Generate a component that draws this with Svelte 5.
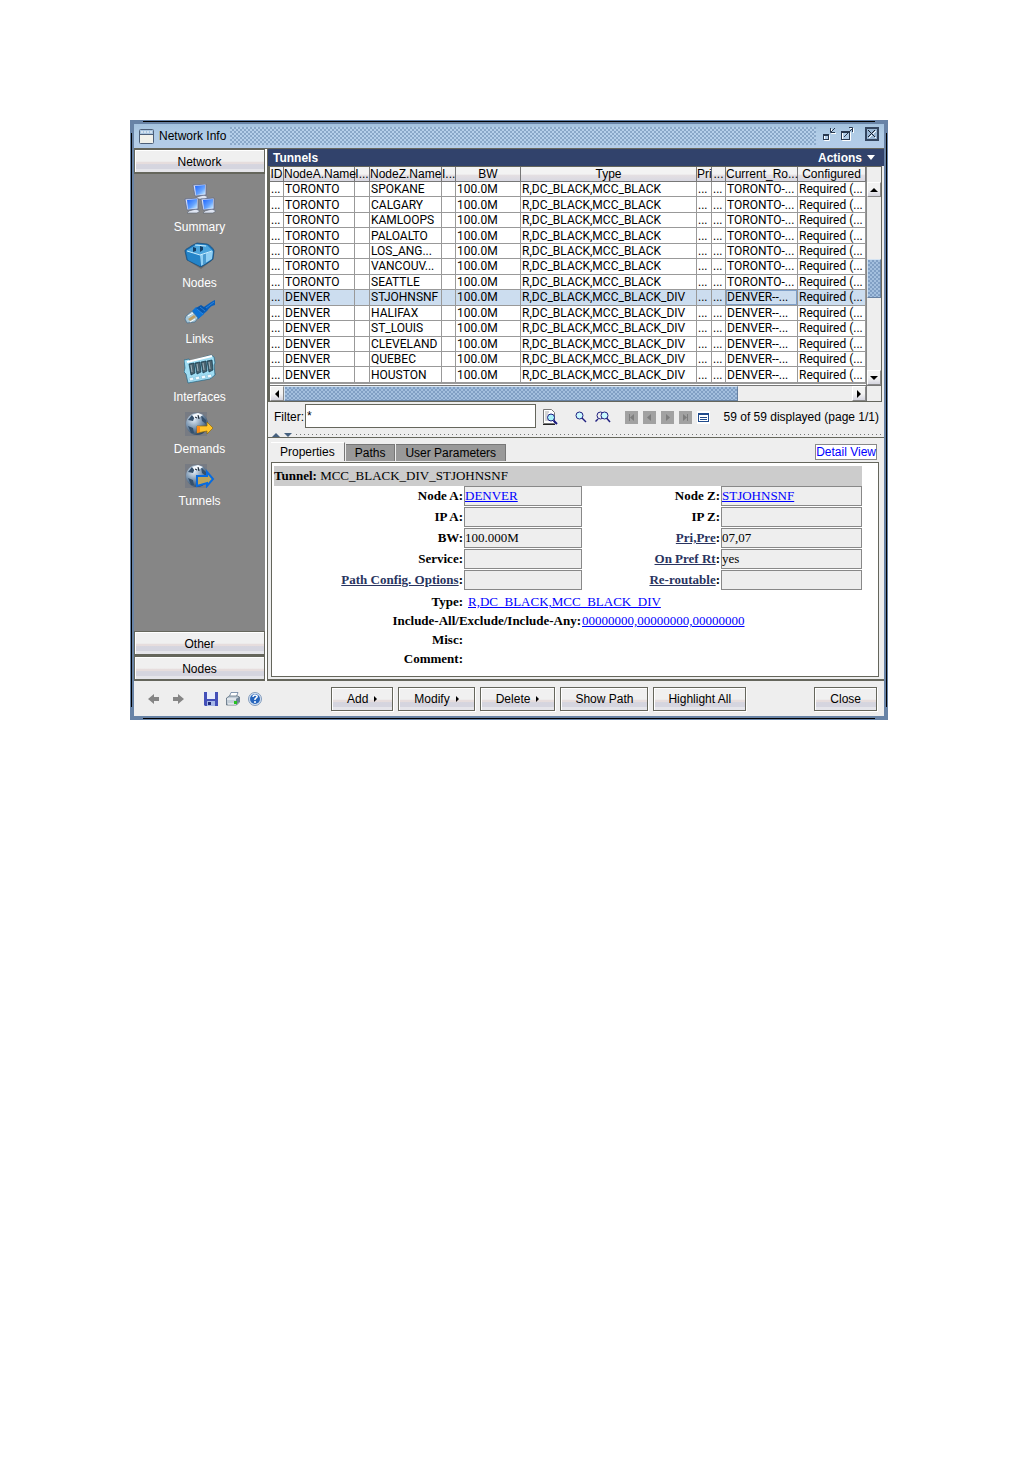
<script>
  const columns = [
    { name: 'ID', width: 14 },
    { name: 'NodeA.Name', width: 71 },
    { name: 'I...', width: 15 },
    { name: 'NodeZ.Name', width: 72 },
    { name: 'I...', width: 14 },
    { name: 'BW', width: 65 },
    { name: 'Type' },
    { name: 'Pri', width: 15 },
    { name: '...', width: 14 },
    { name: 'Current_Ro...', width: 72 },
    { name: 'Configured', width: 68 }
  ];

  const routes = [
    ['TORONTO', ['SPOKANE', 'CALGARY', 'KAMLOOPS', 'PALOALTO', 'LOS_ANG...', 'VANCOUV...', 'SEATTLE']],
    ['DENVER', ['STJOHNSNF', 'HALIFAX', 'ST_LOUIS', 'CLEVELAND', 'QUEBEC', 'HOUSTON']]
  ];

  const rows = routes.flatMap(([from, targets]) =>
    targets.map((to) => {
      const div = from === 'DENVER';
      return [
        '...', from, '', to, '', '100.0M',
        div ? 'R,DC_BLACK,MCC_BLACK_DIV' : 'R,DC_BLACK,MCC_BLACK',
        '...', '...',
        div ? 'DENVER--...' : 'TORONTO-...',
        'Required (...'
      ];
    })
  );

  const sections = ['Summary', 'Nodes', 'Links', 'Interfaces', 'Demands', 'Tunnels'];

  const fields = [
    { id: 'node-a', label: 'Node A', value: 'DENVER', link: true },
    { id: 'node-z', label: 'Node Z', value: 'STJOHNSNF', link: true },
    { id: 'ip-a', label: 'IP A', value: '' },
    { id: 'ip-z', label: 'IP Z', value: '' },
    { id: 'bw', label: 'BW', value: '100.000M' },
    { id: 'pri', label: 'Pri,Pre', value: '07,07', help: true },
    { id: 'service', label: 'Service', value: '' },
    { id: 'pref', label: 'On Pref Rt', value: 'yes', help: true },
    { id: 'options', label: 'Path Config. Options', value: '', help: true },
    { id: 'reroute', label: 'Re-routable', value: '', help: true }
  ];

  const pagers = [
    { name: 'First page', d: 'M4 3h1v7h-1zM9 3v7l-4-3.5z' },
    { name: 'Previous page', d: 'M8 3v7l-4-3.5z' },
    { name: 'Next page', d: 'M5 3v7l4-3.5z' },
    { name: 'Last page', d: 'M8 3h1v7h-1zM4 3v7l4-3.5z' }
  ];

  let selected = $state(7);
  let filter = $state('*');
</script>

{#snippet globe()}
  <rect x="1" y="0" width="22" height="24" fill="#777b83" />
  <circle cx="13" cy="12" r="11" fill="url(#globe)" />
  <path d="M4 8l4-5 3 1-2 5zM17 3l5 5v4l-4-3zM4 14l5 2 1 5-3 0z" fill="#35506c" />
  <path d="M8 3l6-2 5 2-3 2-2-1-3 3z" fill="#f4f8fc" />
  <path d="M14 3l1 4M11 5l2 1" stroke="#111c28" />
{/snippet}

{#snippet icon(name)}
  {#if name === 'Summary'}
    <svg class="tall" viewBox="0 0 32 30" aria-hidden="true">
      {#each [[9, 0], [1, 14], [17, 14]] as [x, y]}
        <g transform="translate({x} {y})">
          <path d="M4 13l-2 2h10l3-2-4-2z" fill="#dfe5f2" stroke="#5d6473" stroke-width=".6" />
          <path d="M0 1l13-1v11l-11 1z" fill="#d4dcf4" stroke="#59658a" stroke-width=".7" />
          <path d="M2 2l10-1v9l-9 1z" fill="url(#screen)" />
        </g>
      {/each}
    </svg>
  {:else if name === 'Nodes'}
    <svg class="mid" viewBox="0 0 32 28" aria-hidden="true">
      <path d="M6 20l11 7 13-10z" fill="#6b6b6b" />
      <path d="M1 9c0-2 4-3 6-5l6-3 10 1c3 1 7 5 7 7l-1 8c-3 3-9 6-12 8L3 18z" fill="#176eb5" stroke="#164a75" stroke-width=".7" />
      <path d="M2 9l11-7 10 1 6 6-13 4z" fill="#4ba4dc" />
      <path d="M16 13l13-4-1 8-11 7z" fill="#91d0f4" />
      <path d="M2 9l14 4v11L4 18z" fill="#2484c8" />
      <path d="M19 12l3-1v10l-3 2z" fill="#4b9bd0" />
      <path d="M9 5l3 1v3l-3 1zM16 4l3 1v3l-3 2z" fill="#123f68" />
      <path d="M3 9l13 4 12-4M11 3l11 1" fill="none" stroke="#c8edff" />
    </svg>
  {:else if name === 'Links'}
    <svg class="mid" viewBox="0 0 32 28" aria-hidden="true">
      <path d="M31 2v5c-5 1-6 4-8 6l-9 8-6-7 4-3c7 1 13-7 19-9z" fill="#0960bd" />
      <path d="M8 13l6 8 6-5-8-7z" fill="#0c73d6" />
      <path d="M12 10l5-3 6 4-5 4z" fill="#0756ac" />
      <path d="M13 11l6 5M16 9l5 4M30 4l-8 6" stroke="#3f91e4" stroke-width=".7" fill="none" />
      <path d="M2 18l6-5 6 7-3 4-8 1-2-4z" fill="#a9c9d9" stroke="#456c8d" stroke-width=".7" />
      <path d="M4 18l5-3M6 24l5-3" stroke="#fff" />
      <path d="M4 21l6-4 2 2-6 4z" fill="#bd9e63" />
    </svg>
  {:else if name === 'Interfaces'}
    <svg class="tall" viewBox="0 0 32 30" aria-hidden="true">
      <path d="M3 27l23-3 6-4-4-3z" fill="#60666b" />
      <path d="M0 6l5-1 1 2L27 1l3 2 1 6-1 2 1 10-5 4-22 4-2-9-2-2 1-4z" fill="#9fdcf2" stroke="#246484" stroke-width=".7" />
      <path d="M3 8l25-6" stroke="#fff" stroke-width="2" />
      {#each [5, 11, 17, 23] as x, i}
        <path d="M{x} {10 - i}l5-1 1 10-4 2z" fill="#4b6470" stroke="#0d3447" stroke-width=".7" />
        <path d="M{x + 2} {11 - i}l1 7" stroke="#9fb4bf" />
        <path d="M{x} {24 - i}l4-1 1 3-4 1z" fill="#f2fbff" stroke="#6db1d1" stroke-width=".5" />
      {/each}
    </svg>
  {:else if name === 'Demands'}
    <svg class="low" viewBox="0 0 32 24" aria-hidden="true">
      {@render globe()}
      <path d="M13 14h10v-4l6 6-6 6v-3l-10 2z" fill="#ffc42b" stroke="#8b690f" stroke-width=".7" />
      <path d="M13 14h3v6l-3 1z" fill="#ff8b16" />
    </svg>
  {:else}
    <svg class="low" viewBox="0 0 32 24" aria-hidden="true">
      {@render globe()}
      <path d="M13 12h10V8l6 7-6 7v-3l-10 3z" fill="#bca55d" stroke="#086be0" stroke-width="2" />
    </svg>
  {/if}
{/snippet}

<svg class="defs" width="0" height="0" aria-hidden="true">
  <defs>
    <linearGradient id="screen" x1="0" y1="0" x2="1" y2="1">
      <stop offset="0" stop-color="#1862ff" />
      <stop offset=".6" stop-color="#67a4ff" />
      <stop offset="1" stop-color="#d2f4ff" />
    </linearGradient>
    <radialGradient id="globe" cx=".35" cy=".3" r=".8">
      <stop offset="0" stop-color="#e3edf7" />
      <stop offset=".5" stop-color="#7893ae" />
      <stop offset="1" stop-color="#20374f" />
    </radialGradient>
  </defs>
</svg>

<main class="window">
  <header class="titlebar">
    <svg width="15" height="15" viewBox="0 0 15 15" aria-hidden="true">
      <rect x=".5" y=".5" width="14" height="14" rx="1" fill="#f1f1eb" stroke="#4d5f78" />
      <path d="M1 1h13v4H1z" fill="#a9c5df" />
      <path d="M2 3h11" stroke="#fff" stroke-dasharray="2 1" />
      <path d="M1 5.5h13" stroke="#4d5f78" />
    </svg>
    <h1>Network Info</h1>
    <div class="grip dots"></div>
    <div class="controls">
      <button aria-label="Minimize">
        <svg width="14" height="14" viewBox="0 0 14 14">
          <path d="M2.500 8.500h5v5h-5zM9.500 2v4.500H14" fill="none" stroke="#fff" />
          <path d="M1 7h6v6H1zM2 9v3h4V9z" fill="#28384f" fill-rule="evenodd" />
          <path d="M8.500 1v4.500H13M9 5l4-4" fill="none" stroke="#28384f" />
        </svg>
      </button>
      <button aria-label="Maximize">
        <svg width="14" height="14" viewBox="0 0 14 14">
          <path d="M2.500 5.500h8v8h-8zM10 1.500h3.500V6" fill="none" stroke="#fff" />
          <path d="M1 4h9v9H1zM2 6v6h7V6z" fill="#28384f" fill-rule="evenodd" />
          <path d="M4 10l8-8M9 .5h3.500V5" fill="none" stroke="#28384f" />
        </svg>
      </button>
      <button class="close" aria-label="Close window">
        <svg width="14" height="14" viewBox="0 0 14 14">
          <rect x="1" y="1" width="12" height="12" fill="#9ab7d4" stroke="#34465f" stroke-width="2" />
          <path d="M4 4l7 7M11 4l-7 7" stroke="#fff" />
          <path d="M3 3l7 7M10 3l-7 7" stroke="#18202d" />
        </svg>
      </button>
    </div>
  </header>

  <div class="body">
    <nav class="sidebar">
      <button class="fold">Network</button>
      <ul>
        {#each sections as name}
          <li><button>{@render icon(name)}<span>{name}</span></button></li>
        {/each}
      </ul>
      <button class="fold">Other</button>
      <button class="fold">Nodes</button>
    </nav>

    <section class="content">
      <div class="heading">
        <h2>Tunnels</h2>
        <button>Actions
          <svg width="8" height="5" viewBox="0 0 8 5" aria-hidden="true"><path d="M0 0h8L4 5z" fill="#fff" /></svg>
        </button>
      </div>

      <div class="grid">
        <div class="viewport">
          <table>
            <colgroup>
              {#each columns as col}
                <col style={col.width ? `width: ${col.width}px` : ''} />
              {/each}
            </colgroup>
            <thead>
              <tr>{#each columns as col}<th>{col.name}</th>{/each}</tr>
            </thead>
            <tbody>
              {#each rows as row, r}
                <tr class:selected={r === selected} onclick={() => (selected = r)}>
                  {#each row as cell, c}<td class:focus={r === selected && c === 9}>{cell}</td>{/each}
                </tr>
              {/each}
            </tbody>
          </table>
        </div>
        <div class="vscroll">
          <button class="arrow" aria-label="Scroll up"><svg width="8" height="4" viewBox="0 0 8 4"><path d="M0 4h8L4 0z" /></svg></button>
          <div class="above"></div>
          <div class="thumb dots"></div>
          <div class="below"></div>
          <button class="arrow" aria-label="Scroll down"><svg width="8" height="4" viewBox="0 0 8 4"><path d="M0 0h8L4 4z" /></svg></button>
        </div>
        <div class="hscroll">
          <button class="arrow" aria-label="Scroll left"><svg width="4" height="8" viewBox="0 0 4 8"><path d="M4 0v8L0 4z" /></svg></button>
          <div class="thumb dots"></div>
          <div class="rest"></div>
          <button class="arrow" aria-label="Scroll right"><svg width="4" height="8" viewBox="0 0 4 8"><path d="M0 0v8l4-4z" /></svg></button>
        </div>
        <div class="corner"></div>
      </div>

      <div class="filter">
        <label for="filter">Filter:</label>
        <input id="filter" bind:value={filter} />
        <button class="tool" aria-label="Filter options">
          <svg width="16" height="16" viewBox="0 0 16 16">
            <path d="M1.500.5h8l3 3v11h-11z" fill="#fff" stroke="#777" />
            <path d="M1 15.500h12" stroke="#222" />
            <path d="M3 3h4M3 5h3M3 7h2M3 9h2M3 11h3" stroke="#aaa" />
            <circle cx="9" cy="8.500" r="3.500" fill="#a9f2fa" stroke="#181880" />
            <path d="M11.500 11.500l3.500 3.500" stroke="#181880" stroke-width="2" />
          </svg>
        </button>
        <button class="tool" aria-label="Search">
          <svg width="12" height="12" viewBox="0 0 12 12">
            <circle cx="4.500" cy="4.500" r="3.500" fill="#c9faff" stroke="#202080" />
            <path d="M7 7l4 4" stroke="#202080" stroke-width="1.500" />
          </svg>
        </button>
        <button class="tool" aria-label="Search again">
          <svg width="16" height="12" viewBox="0 0 16 12">
            <path d="M3 8L.5 10.500" stroke="#202080" stroke-width="1.500" />
            <circle cx="5.500" cy="4.500" r="3.500" fill="#eee" stroke="#202080" />
            <circle cx="9.500" cy="4.500" r="3.500" fill="#c9faff" stroke="#202080" />
            <path d="M11.500 7l3.500 4" stroke="#202080" stroke-width="1.500" />
          </svg>
        </button>
        <div class="pagers">
          {#each pagers as pager}
            <button aria-label={pager.name} disabled>
              <svg width="13" height="13" viewBox="0 0 13 13"><path d={pager.d} fill="#7d7d7d" /></svg>
            </button>
          {/each}
          <button class="list" aria-label="Page settings">
            <svg width="13" height="13" viewBox="0 0 13 13">
              <rect x="1.500" y="2.500" width="10" height="8" fill="#fff" stroke="#204b8c" />
              <path d="M1 3h11" stroke="#204b8c" stroke-width="2" />
              <path d="M3 6.500h7M3 8.500h7" stroke="#204b8c" />
            </svg>
          </button>
        </div>
        <output>59 of 59 displayed (page 1/1)</output>
      </div>

      <div class="splitter">
        <svg width="20" height="4" viewBox="0 0 20 4" aria-hidden="true"><path d="M0 4h8L4 0zM12 0h8l-4 4z" fill="#46617f" /></svg>
      </div>

      <div class="details">
        <div class="tabs">
          <button class="active">Properties</button>
          <button>Paths</button>
          <button>User Parameters</button>
          <a href="#detail">Detail View</a>
        </div>
        <div class="panel">
          <p class="caption"><b>Tunnel:</b> MCC_BLACK_DIV_STJOHNSNF</p>
          <div class="form">
            {#each fields as field}
              <label for={field.id}>{#if field.help}<a href="#{field.id}-help">{field.label}</a>{:else}{field.label}{/if}:</label>
              {#if field.link}
                <output class="value" id={field.id}><a href="#{field.value}">{field.value}</a></output>
              {:else}
                <input class="value" id={field.id} value={field.value} readonly />
              {/if}
            {/each}
          </div>
          <dl class="form extra">
            <dt>Type:</dt>
            <dd class="type"><a href="#type">R,DC_BLACK,MCC_BLACK_DIV</a></dd>
            <dt class="wide">Include-All/Exclude/Include-Any:</dt>
            <dd class="mask"><a href="#affinity">00000000,00000000,00000000</a></dd>
            <dt>Misc:</dt>
            <dd></dd>
            <dt>Comment:</dt>
            <dd></dd>
          </dl>
        </div>
      </div>
    </section>
  </div>

  <footer>
    <div class="shortcuts">
      <button aria-label="Back"><svg width="12" height="12" viewBox="0 0 12 12"><path d="M0 6l6-5v3h5v4H6v3z" fill="#858585" /></svg></button>
      <button aria-label="Forward"><svg width="12" height="12" viewBox="0 0 12 12"><path d="M12 6L6 1v3H1v4h5v3z" fill="#858585" /></svg></button>
      <button class="save" aria-label="Save">
        <svg width="14" height="14" viewBox="0 0 14 14">
          <path d="M0 0h14v14H1l-1-1z" fill="#4450b8" />
          <path d="M3 0h8v7H3z" fill="#e8edfb" />
          <path d="M3 9h8v5H3z" fill="#a7b8e8" />
          <path d="M4 10h3v3H4z" fill="#202a79" />
        </svg>
      </button>
      <button aria-label="Print">
        <svg width="14" height="14" viewBox="0 0 14 14">
          <path d="M5 .5h7l-2 5H3z" fill="#fff" stroke="#557091" stroke-width=".7" />
          <path d="M.5 6l3-2h8l2 1v5l-3 3H.5z" fill="#c3ced8" stroke="#475b6e" stroke-width=".7" />
          <path d="M10 7l3-2v5l-3 3z" fill="#6f8496" />
          <path d="M1 7h9M2 12h8" stroke="#fff" />
          <path d="M8 9h3v3H8z" fill="#27c322" />
        </svg>
      </button>
      <button aria-label="Help">
        <svg width="14" height="14" viewBox="0 0 14 14">
          <circle cx="7" cy="7" r="6.500" fill="#d2e1f3" stroke="#849cbb" />
          <circle cx="7" cy="7" r="5" fill="#2765bc" />
          <path d="M5 5c0-3 5-2 4 0L7 7v1M7 9v2" fill="none" stroke="#fff" stroke-width="1.500" />
        </svg>
      </button>
    </div>
    <div class="actions">
      {#each ['Add', 'Modify', 'Delete'] as name}
        <button class="menu">{name}<svg width="3" height="6" viewBox="0 0 3 6" aria-hidden="true"><path d="M0 0v6l3-3z" /></svg></button>
      {/each}
      <button>Show Path</button>
      <button>Highlight All</button>
    </div>
    <button class="dismiss">Close</button>
  </footer>
</main>

<style>
  :global(body) {
    margin: 0;
    background: #fff;
  }

  .defs {
    position: absolute;
  }

  .window {
    --edge: #65665c;
    --bevel: linear-gradient(#f0f0f0 0 52%, #e6dddd 53% 65%, #d5d5df 66% 86%, #e5e5ea 87%);
    margin: 120px 123px 0 130px;
    padding: 4px;
    font: 12px/14px "Liberation Sans", Arial, sans-serif;
    color: #000;
    background:
      linear-gradient(#000, #000) center 1px / calc(100% - 26px) 1px no-repeat,
      linear-gradient(#000, #000) center calc(100% - 1px) / calc(100% - 26px) 1px no-repeat,
      linear-gradient(#000, #000) 1px center / 1px calc(100% - 26px) no-repeat,
      linear-gradient(#000, #000) calc(100% - 1px) center / 1px calc(100% - 26px) no-repeat,
      #6883a6;
  }

  button,
  input {
    box-sizing: border-box;
    margin: 0;
    padding: 0;
    border: 0;
    border-radius: 0;
    font: inherit;
    color: inherit;
    background: none;
  }

  svg {
    display: block;
    flex: none;
  }

  h1,
  h2,
  p,
  ul,
  dl,
  dd {
    margin: 0;
    padding: 0;
  }

  .dots {
    background-color: #a3bfde;
    background-image:
      radial-gradient(circle at 1px 1px, #809fc4 0 1px, transparent 1px),
      radial-gradient(circle at 3px 3px, #809fc4 0 1px, transparent 1px);
    background-size: 4px 4px;
  }

  .titlebar {
    display: flex;
    align-items: center;
    height: 24px;
    padding: 0 5px 0 5px;
    background: linear-gradient(#a4c2de, #b0cce6 40%, #b4cce8);
  }

  .titlebar h1 {
    margin: 0 4px 0 5px;
    font-size: 12px;
    font-weight: normal;
  }

  .grip {
    flex: 1;
    height: 18px;
    background-color: #b6d0ea;
    background-image:
      radial-gradient(circle at 1px 1px, #8aa8c8 0 1px, transparent 1px),
      radial-gradient(circle at 3px 3px, #8aa8c8 0 1px, transparent 1px);
  }

  .controls {
    display: flex;
    gap: 4px;
    padding: 0 0 4px 6px;
  }

  .controls .close {
    margin-left: 7px;
  }

  .body {
    display: flex;
    border-top: 1px solid var(--edge);
    background: #eee;
  }

  .sidebar {
    display: flex;
    flex-direction: column;
    width: 131px;
    border-right: 2px solid #fff;
    background: #868686;
  }

  .sidebar ul {
    flex: 1;
    display: flex;
    flex-direction: column;
    gap: 8px;
    padding-top: 10px;
    list-style: none;
  }

  .sidebar li button {
    display: flex;
    flex-direction: column;
    align-items: center;
    gap: 6px;
    width: 100%;
    color: #fff;
  }

  .sidebar li svg {
    width: 32px;
  }

  .tall {
    height: 30px;
  }

  .mid {
    height: 28px;
  }

  .low {
    height: 24px;
  }

  .fold {
    height: 25px;
    padding-top: 2px;
    border: 1px solid var(--edge);
    border-width: 1px 1px 2px;
    box-shadow: inset 1px 1px #fff;
    background: var(--bevel);
  }

  .content {
    flex: 1;
    min-width: 0;
    border-left: 1px solid var(--edge);
  }

  .heading {
    display: flex;
    justify-content: space-between;
    align-items: center;
    height: 17px;
    padding: 0 9px 0 5px;
    color: #fff;
    background: #31426b;
  }

  .heading h2,
  .heading button {
    display: flex;
    align-items: center;
    gap: 5px;
    font-size: 12px;
    font-weight: bold;
  }

  .grid {
    display: grid;
    grid-template-columns: minmax(0, 1fr) 15px;
    grid-template-rows: 218px 16px;
    margin-right: 2px;
    border: 1px solid var(--edge);
    border-left-width: 2px;
  }

  .viewport {
    overflow: hidden;
    background: linear-gradient(#999, #999) 0 216px / 100% 1px no-repeat, #fff;
  }

  table {
    width: 100%;
    height: 216px;
    border-collapse: separate;
    border-spacing: 0;
    table-layout: fixed;
  }

  th,
  td {
    padding: 0 0 0 1px;
    border-right: 1px solid #999;
    white-space: nowrap;
    line-height: 14px;
    text-align: left;
  }

  th {
    height: 14px;
    padding: 0;
    border-bottom: 1px solid #777;
    border-right-color: #777;
    font-weight: normal;
    text-align: center;
    background: linear-gradient(#f3f3f3 50%, #e4dfe2 60%, #d8d8e2);
  }

  td {
    border-bottom: 1px solid #999;
    font-family: Roboto, "Liberation Sans", sans-serif;
  }

  .selected td {
    background: #ccddef;
  }

  .selected .focus {
    box-shadow: inset 0 0 0 1px #7e9fc8;
  }

  .vscroll {
    display: flex;
    flex-direction: column;
    padding-top: 15px;
    border-left: 1px solid #888;
    background: #eee;
  }

  .arrow {
    display: flex;
    flex: none;
    align-items: center;
    justify-content: center;
    width: 14px;
    height: 15px;
    border: 1px solid #888;
    border-top-color: #fff;
    border-left-color: #fff;
    background: linear-gradient(#f3f3f3 50%, #d5d5df);
  }

  .thumb {
    border: 1px solid #6781a2;
    border-top-color: #d4e3f2;
    border-left-color: #d4e3f2;
  }

  .above {
    flex: 62;
  }

  .vscroll .thumb {
    flex: 37;
  }

  .below {
    flex: 72;
  }

  .hscroll {
    display: flex;
    border-top: 1px solid #777;
    background: #eee;
  }

  .hscroll .thumb {
    flex: 453;
  }

  .rest {
    flex: 114;
  }

  .corner {
    border: 1px solid #777;
    border-width: 1px 0 0 1px;
  }

  .filter {
    display: flex;
    align-items: center;
    height: 30px;
    padding: 0 5px 0 6px;
  }

  .filter input {
    flex: 1;
    min-width: 80px;
    height: 24px;
    margin: 0 6px 2px 1px;
    padding: 0 1px;
    border: 1px solid var(--edge);
    background: #fff;
  }

  .tool {
    margin-right: 8px;
  }

  .tool:nth-of-type(1) {
    margin-right: 17px;
  }

  .pagers {
    display: flex;
    gap: 5px;
    margin: 0 14px 0 6px;
  }

  .pagers button {
    background: #a2a2a2;
  }

  .pagers .list {
    background: #fff;
  }

  .splitter {
    display: flex;
    align-items: center;
    height: 5px;
    padding-left: 4px;
    border-bottom: 1px solid var(--edge);
  }

  .splitter::after {
    content: "";
    flex: 1;
    height: 1px;
    margin-left: 4px;
    background: repeating-linear-gradient(90deg, #777 0 1px, transparent 1px 4px);
  }

  .details {
    padding: 4px 5px 2px 3px;
    border-bottom: 2px solid var(--edge);
  }

  .tabs {
    display: flex;
    align-items: flex-end;
    height: 19px;
    padding-bottom: 1px;
  }

  .tabs button {
    height: 17px;
    margin-right: 1px;
    padding: 0 9px;
    border-right: 1px solid #777;
    border-top: 1px solid #777;
    background: #999;
  }

  .tabs .active {
    height: 19px;
    border-top-color: #fff;
    background: #eee;
  }

  .tabs a {
    margin: 0 2px 1px auto;
    border: 1px solid #888;
    color: #00f;
    text-decoration: none;
    background: #fff;
  }

  .panel {
    min-height: 208px;
    padding: 3px 16px 2px 2px;
    border: 1px solid var(--edge);
    font: 13px/19px "Liberation Serif", "Times New Roman", serif;
    background: #fff;
  }

  .caption {
    line-height: 20px;
    background: #ccc;
  }

  .form {
    display: grid;
    grid-template-columns: 190px 118px minmax(0, 1fr) 141px;
    row-gap: 1px;
  }

  .form label,
  .form dt {
    padding-right: 1px;
    font-weight: bold;
    text-align: right;
    white-space: nowrap;
  }

  .form label {
    line-height: 20px;
  }

  .value {
    width: 100%;
    height: 20px;
    box-sizing: border-box;
    border: 1px solid #888;
    line-height: 18px;
    background: #eee;
  }

  a {
    color: #00f;
  }

  label a {
    color: #293460;
  }

  .extra {
    row-gap: 0;
    padding-top: 2px;
  }

  .extra dd {
    grid-column: 2 / -1;
  }

  .extra .type {
    padding-left: 4px;
  }

  .extra .wide {
    grid-column: 1 / 3;
  }

  .extra .mask {
    grid-column: 3 / -1;
  }

  footer {
    display: flex;
    align-items: center;
    height: 35px;
    padding: 0 7px 0 14px;
    background: #eee;
  }

  .shortcuts {
    display: flex;
    align-items: center;
    gap: 8px;
    width: 183px;
  }

  .shortcuts button:first-child {
    margin-right: 4px;
  }

  .shortcuts .save {
    margin-left: 12px;
  }

  .actions {
    display: flex;
    flex: 1;
    gap: 5px;
  }

  .actions button,
  .dismiss {
    display: flex;
    align-items: center;
    gap: 6px;
    height: 24px;
    padding: 0 15px;
    border: 1px solid var(--edge);
    box-shadow: inset 1px 1px #fff, 1px 1px #fff;
    background: var(--bevel);
  }

  .actions button {
    padding: 0 14px;
  }

  .actions .menu {
    padding: 0 15px;
  }
</style>
